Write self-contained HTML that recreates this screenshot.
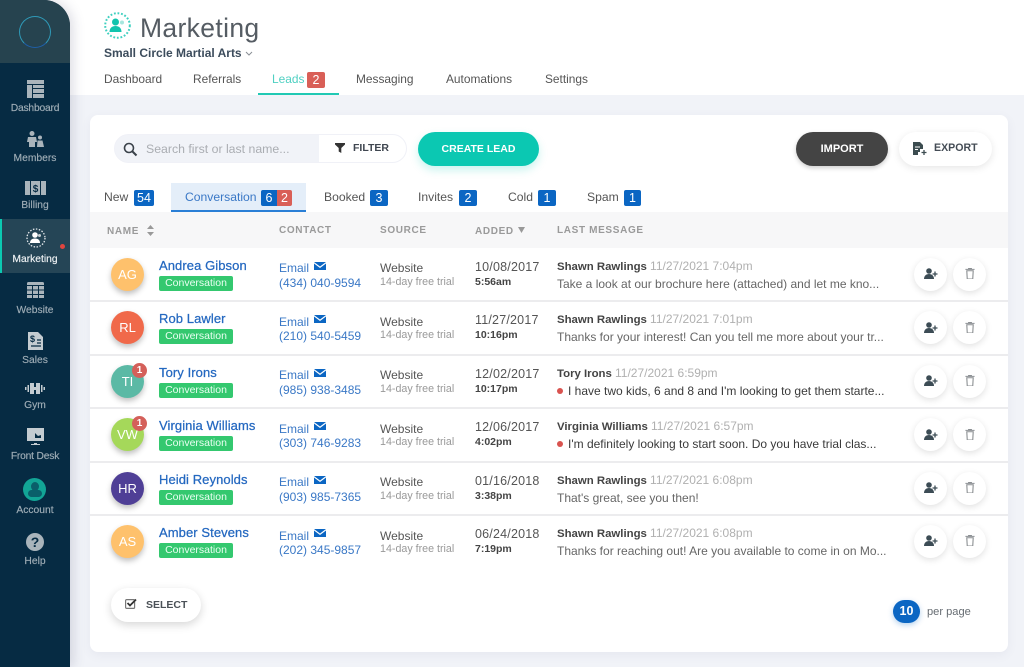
<!DOCTYPE html>
<html><head><meta charset="utf-8"><style>
*{box-sizing:border-box}
html,body{margin:0;padding:0;width:1024px;height:667px;overflow:hidden;background:#f1f3f8;font-family:"Liberation Sans",sans-serif}
.t{position:absolute;white-space:nowrap;line-height:1}
.a{position:absolute}
.nav{color:#9fadb6;font-size:10.3px;width:70px;text-align:center;left:0;margin-top:1px;-webkit-text-stroke:.15px #9fadb6}
.ti{color:#555;font-size:12.15px}
.n{color:#555;font-size:11.9px;margin-top:1px}
.h{color:#9a9a9a;font-size:10px;font-weight:bold;letter-spacing:.65px;margin-top:1px}
.b{position:absolute;height:16px;border-radius:2px;background:#0b66c3;color:#fff;font-size:12.5px;line-height:16px;text-align:center}
.nm{color:#2468c0;font-size:13px;letter-spacing:.08px;-webkit-text-stroke:.25px #2468c0}
.tag{position:absolute;left:159px;width:74px;height:15px;border-radius:2px;background:#34c86f;color:#eafff2;font-size:10.5px;line-height:15px;text-align:center}
.bl{color:#3a78c6;font-size:12px;margin-top:1px}
.d{color:#555;font-size:12px}
.dt{color:#555;font-size:12.5px;letter-spacing:.2px}
.s{color:#999;font-size:10.7px}
.tm{color:#444;font-size:10.5px;font-weight:bold}
.who{color:#444;font-size:11.4px;font-weight:bold}
.wh{color:#b0b0b0;font-size:12px;font-weight:normal}
.m{color:#666;font-size:12px}
.m2{color:#3a3a3a;font-size:12px}
.av{position:absolute;left:111px;width:33px;height:33px;border-radius:50%;color:#fff;font-size:13px;line-height:33px;text-align:center;box-shadow:0 3px 6px rgba(0,0,0,.25)}
.rb{position:absolute;width:33px;height:33px;border-radius:50%;background:#fff;box-shadow:0 2px 7px rgba(0,0,0,.12)}
.sep{position:absolute;left:90px;width:918px;height:1.5px;background:#ececee}
.dot{position:absolute;width:15px;height:15px;border-radius:50%;background:#d4605a;color:#fff;font-size:10px;font-weight:bold;line-height:15px;text-align:center;left:132px}
.rd{position:absolute;left:557px;width:6px;height:6px;border-radius:50%;background:#d9534f}
svg{position:absolute;display:block}
</style></head><body>
<!-- header -->
<div class="a" style="left:0;top:0;width:1024px;height:95px;background:#fff"></div>
<!-- sidebar -->
<div class="a" style="left:0;top:0;width:70px;height:667px;background:#062b43;border-top-right-radius:26px;box-shadow:3px 0 12px rgba(60,60,100,.18);overflow:hidden">
 <div class="a" style="left:0;top:0;width:70px;height:63px;background:#26434f"></div>
 <div class="a" style="left:0;top:219px;width:70px;height:54px;background:#254556"></div>
 <div class="a" style="left:0;top:219px;width:2px;height:54px;background:#0bc9b2"></div>
</div>
<div class="a" style="left:19px;top:16px;width:32px;height:32px;border-radius:50%;border:1.3px solid #2f9ab8;border-bottom-color:#1f5fa8"></div>
<!-- sidebar icons -->
<svg style="left:27px;top:80px" width="17" height="18" viewBox="0 0 17 18" fill="#a9b4bb"><path d="M0 0h17v4H0zM0 5h5v13H0zM6 5h11v3H6zM6 9h11v4H6zM6 14h11v4H6z"/></svg>
<svg style="left:27px;top:131px" width="17" height="16" viewBox="0 0 17 16" fill="#a9b4bb"><circle cx="5" cy="2.500" r="2.500"/><path d="M1 6h8l1 5H8v5H2v-5H0z"/><circle cx="13" cy="6.500" r="2"/><path d="M10.500 9.500h5l1.500 6.500h-7z"/></svg>
<svg style="left:25px;top:181px" width="21" height="14" viewBox="0 0 21 14" fill="#a9b4bb"><path d="M0 0h5v14H0zM16 0h5v14h-5zM6 0h9v14H6z"/><text x="10.500" y="11" font-size="10" font-weight="bold" text-anchor="middle" fill="#062b43" font-family="Liberation Sans">$</text></svg>
<svg style="left:26px;top:228px" width="20" height="20" viewBox="0 0 20 20"><circle cx="10" cy="10" r="9" fill="none" stroke="#e5e9ec" stroke-width="1.300" stroke-dasharray="1.500 1.500"/><circle cx="9" cy="7" r="2.800" fill="#fff"/><path d="M4 15c0-3 2-4.500 5-4.500s5 1.500 5 4.500z" fill="#fff"/><circle cx="13.500" cy="7.500" r="1.500" fill="#c9d0d5"/></svg>
<div class="a" style="left:60px;top:244px;width:5px;height:5px;border-radius:50%;background:#e0453f"></div>
<svg style="left:27px;top:282px" width="17" height="16" viewBox="0 0 17 16" fill="#a9b4bb"><path d="M0 1.500Q0 0 1.500 0h14Q17 0 17 1.500V3H0zM0 4h5v3.500H0zM6 4h5v3.500H6zM12 4h5v3.500h-5zM0 8.500h5V12H0zM6 8.500h5V12H6zM12 8.500h5V12h-5zM0 13h5v3H0zM6 13h5v3H6zM12 13h5v3h-5z"/></svg>
<svg style="left:28px;top:332px" width="15" height="18" viewBox="0 0 15 18"><path d="M0 0h10l5 5v13H0z" fill="#c4ccd1"/><text x="4.500" y="10" font-size="9" font-weight="bold" text-anchor="middle" fill="#062b43" font-family="Liberation Sans">$</text><path d="M9 8h4M9 11h4M3 14h10" stroke="#062b43" stroke-width="1.200"/></svg>
<svg style="left:25px;top:383px" width="20" height="11" viewBox="0 0 20 11" fill="#c4ccd1"><path d="M0 4h1.500v3H0zM2.500 2H4v7H2.500zM5 0h4v11H5zM9 4h2v3H9zM11 0h4v11h-4zM16 2h1.500v7H16zM18.500 4H20v3h-1.500z"/></svg>
<svg style="left:27px;top:428px" width="17" height="18" viewBox="0 0 17 18"><path d="M0 0h17v13H0z" fill="#c4ccd1"/><path d="M7 15h3v1h3v1H4v-1h3z" fill="#c4ccd1"/><path d="M8 5l3 3 3-1v3H8z" fill="#062b43"/></svg>
<div class="a" style="left:23px;top:478px;width:23px;height:23px;border-radius:50%;background:#12a596;overflow:hidden"><div class="a" style="left:7.500px;top:4px;width:8px;height:9px;border-radius:50%;background:#0a5f6a"></div><div class="a" style="left:4.500px;top:12px;width:14px;height:7px;border-radius:4px;background:#0a5f6a"></div></div>
<div class="a" style="left:26px;top:533px;width:18px;height:18px;border-radius:50%;background:#a9b4bb;color:#062b43;font-size:14px;font-weight:bold;line-height:18px;text-align:center">?</div>
<div class="t nav" style="top:103px;letter-spacing:-.2px">Dashboard</div>
<div class="t nav" style="top:153px">Members</div>
<div class="t nav" style="top:200px">Billing</div>
<div class="t nav" style="top:254px;color:#f0f3f5;-webkit-text-stroke:.15px #f0f3f5">Marketing</div>
<div class="t nav" style="top:305px">Website</div>
<div class="t nav" style="top:355px">Sales</div>
<div class="t nav" style="top:400px">Gym</div>
<div class="t nav" style="top:451px;letter-spacing:-.2px">Front Desk</div>
<div class="t nav" style="top:505px">Account</div>
<div class="t nav" style="top:556px">Help</div>
<!-- title -->
<svg style="left:104px;top:12px" width="27" height="27" viewBox="0 0 27 27"><circle cx="13.500" cy="13.500" r="12.300" fill="none" stroke="#3fd0c0" stroke-width="2" stroke-dasharray="1.800 1.800"/><circle cx="11.500" cy="10" r="3.500" fill="#12c4ae"/><path d="M5.500 20c0-4 2.500-6 6-6s6 2 6 6z" fill="#12c4ae"/><circle cx="18" cy="10.500" r="2" fill="#a6e6de"/></svg>
<div class="t" style="left:140px;top:15px;font-size:26.500px;color:#555c63;letter-spacing:.35px">Marketing</div>
<div class="t" style="left:104px;top:47px;font-size:12px;color:#3c4c5c;font-weight:bold">Small Circle Martial Arts</div>
<svg style="left:245px;top:51px" width="8" height="6" viewBox="0 0 8 6"><path d="M1 1l3 3 3-3" fill="none" stroke="#8a8f95" stroke-width="1"/></svg>
<div class="t n" style="left:104px;top:73px">Dashboard</div>
<div class="t n" style="left:193px;top:73px">Referrals</div>
<div class="t n" style="left:272px;top:73px;color:#4fd0c2">Leads</div>
<div class="b" style="left:307px;top:72px;width:18px;height:16px;background:#d95f57;font-size:12.500px">2</div>
<div class="a" style="left:258px;top:93px;width:81px;height:2px;background:#21c9b4"></div>
<div class="t n" style="left:356px;top:73px">Messaging</div>
<div class="t n" style="left:446px;top:73px">Automations</div>
<div class="t n" style="left:545px;top:73px">Settings</div>
<!-- card -->
<div class="a" style="left:90px;top:115px;width:918px;height:537px;background:#fff;border-radius:8px;box-shadow:0 3px 10px rgba(90,90,130,.07)"></div>
<!-- search -->
<div class="a" style="left:114px;top:134px;width:293px;height:29px;border-radius:15px;background:#f1f3f8;border:1px solid #f0f1f7"></div>
<div class="a" style="left:319px;top:135px;width:87px;height:27px;border-radius:0 14px 14px 0;background:#fff"></div>
<svg style="left:123px;top:142px" width="15" height="15" viewBox="0 0 15 15"><circle cx="6" cy="6" r="4.500" fill="none" stroke="#3b424a" stroke-width="1.600"/><path d="M9.500 9.500l4 4" stroke="#3b424a" stroke-width="2"/></svg>
<div class="t" style="left:146px;top:143px;font-size:12.300px;color:#aaadb2">Search first or last name...</div>
<svg style="left:335px;top:143px" width="10" height="10" viewBox="0 0 10 10"><path d="M0 0h10v1.500L6.300 5v5L3.700 8.500V5L0 1.500z" fill="#333"/></svg>
<div class="t" style="left:353px;top:143px;font-size:10.500px;font-weight:bold;color:#3f4650">FILTER</div>
<!-- buttons -->
<div class="a" style="left:418px;top:132px;width:121px;height:34px;border-radius:17px;background:#0bc8b2;box-shadow:0 4px 9px rgba(11,200,178,.22);color:#fff;font-size:10.500px;font-weight:bold;line-height:32px;text-align:center"><span style="position:relative;top:.5px">CREATE LEAD</span></div>
<div class="a" style="left:796px;top:132px;width:92px;height:34px;border-radius:17px;background:#444;box-shadow:0 2px 5px rgba(0,0,0,.2);color:#fff;font-size:11px;font-weight:bold;line-height:32px;text-align:center"><span style="position:relative;top:.5px">IMPORT</span></div>
<div class="a" style="left:899px;top:132px;width:93px;height:34px;border-radius:17px;background:#fff;box-shadow:0 2px 8px rgba(0,0,0,.1)"></div>
<svg style="left:913px;top:142px" width="14" height="14" viewBox="0 0 14 14"><path d="M0 0h7l3 3v4H7v3H5v3H0z" fill="#3c4c50"/><path d="M2 5h5M2 7.500h3" stroke="#fff"/><path d="M11 8v5M8.500 10.500h5" stroke="#3c4c50" stroke-width="1.300"/></svg>
<div class="t" style="left:934px;top:143px;font-size:10.600px;font-weight:bold;color:#444c55">EXPORT</div>
<!-- tabs -->
<div class="a" style="left:171px;top:183px;width:135px;height:29px;background:#e4eef9;border-bottom:2px solid #2a7fd6"></div>
<div class="t ti" style="left:104px;top:191px">New</div>
<div class="b" style="left:134px;top:190px;width:20px">54</div>
<div class="t ti" style="left:185px;top:191px;color:#3a78c6">Conversation</div>
<div class="b" style="left:261px;top:190px;width:16px;border-radius:2px 0 0 2px">6</div>
<div class="b" style="left:277px;top:190px;width:15px;border-radius:0 2px 2px 0;background:#d95f57">2</div>
<div class="t ti" style="left:324px;top:191px">Booked</div>
<div class="b" style="left:370px;top:190px;width:18px">3</div>
<div class="t ti" style="left:418px;top:191px">Invites</div>
<div class="b" style="left:459px;top:190px;width:18px">2</div>
<div class="t ti" style="left:508px;top:191px">Cold</div>
<div class="b" style="left:538px;top:190px;width:18px">1</div>
<div class="t ti" style="left:587px;top:191px">Spam</div>
<div class="b" style="left:624px;top:190px;width:17px">1</div>
<!-- table head -->
<div class="a" style="left:90px;top:212px;width:918px;height:36px;background:#f7f7f8"></div>
<div class="t h" style="left:107px;top:226px">NAME</div>
<svg style="left:147px;top:225px" width="7" height="11" viewBox="0 0 7 11" fill="#999"><path d="M3.500 0L7 4H0zM3.500 11L0 7h7z"/></svg>
<div class="t h" style="left:279px;top:225px">CONTACT</div>
<div class="t h" style="left:380px;top:225px">SOURCE</div>
<div class="t h" style="left:475px;top:226px">ADDED</div>
<svg style="left:518px;top:227px" width="7" height="6" viewBox="0 0 7 6" fill="#999"><path d="M0 0h7L3.500 6z"/></svg>
<div class="t h" style="left:557px;top:225px">LAST MESSAGE</div>
<div class="sep" style="top:300px"></div><div class="sep" style="top:354px"></div><div class="sep" style="top:407px"></div><div class="sep" style="top:461px"></div><div class="sep" style="top:514px"></div>

<!-- row 1 -->
<div class="av" style="top:258px;background:#fec16c">AG</div>
<div class="t nm" style="left:159px;top:259px">Andrea Gibson</div><div class="tag" style="top:276px">Conversation</div>
<div class="t bl" style="left:279px;top:261px">Email</div><svg style="left:314px;top:262px" width="12" height="8" viewBox="0 0 12 8"><path d="M0 0h12L6 4.500zM0 1.500l6 4.500 6-4.500V8H0z" fill="#0b66c3"/></svg>
<div class="t bl" style="left:279px;top:276px">(434) 040-9594</div>
<div class="t d" style="left:380px;top:262px">Website</div><div class="t s" style="left:380px;top:277px">14-day free trial</div>
<div class="t dt" style="left:475px;top:261px">10/08/2017</div><div class="t tm" style="left:475px;top:277px">5:56am</div>
<div class="t who" style="left:557px;top:260px">Shawn Rawlings <span class="wh">11/27/2021 7:04pm</span></div>
<div class="t m" style="left:557px;top:278px">Take a look at our brochure here (attached) and let me kno...</div>
<div class="rb" style="left:914px;top:258px"></div><div class="rb" style="left:953px;top:258px"></div>
<svg style="left:924px;top:268px" width="14" height="11" viewBox="0 0 14 11"><circle cx="5" cy="3" r="2.800" fill="#3c4c55"/><path d="M0 11c0-3 2-5 5-5s5 2 5 5z" fill="#3c4c55"/><path d="M11 3.500v5M8.500 6h5" stroke="#3c4c55" stroke-width="1.300"/></svg>
<svg style="left:965px;top:268px" width="10" height="11" viewBox="0 0 10 12"><path d="M1.500 3h7l-.5 9H2zM0 1.500h10M3.500 1.500V.5h3v1" fill="none" stroke="#8b8f92" stroke-width="1.200"/></svg>
<!-- row 2 -->
<div class="av" style="top:311px;background:#f0694a">RL</div>
<div class="t nm" style="left:159px;top:312px">Rob Lawler</div><div class="tag" style="top:329px">Conversation</div>
<div class="t bl" style="left:279px;top:315px">Email</div><svg style="left:314px;top:315px" width="12" height="8" viewBox="0 0 12 8"><path d="M0 0h12L6 4.500zM0 1.500l6 4.500 6-4.500V8H0z" fill="#0b66c3"/></svg>
<div class="t bl" style="left:279px;top:329px">(210) 540-5459</div>
<div class="t d" style="left:380px;top:316px">Website</div><div class="t s" style="left:380px;top:330px">14-day free trial</div>
<div class="t dt" style="left:475px;top:314px">11/27/2017</div><div class="t tm" style="left:475px;top:330px">10:16pm</div>
<div class="t who" style="left:557px;top:313px">Shawn Rawlings <span class="wh">11/27/2021 7:01pm</span></div>
<div class="t m" style="left:557px;top:331px">Thanks for your interest! Can you tell me more about your tr...</div>
<div class="rb" style="left:914px;top:311px"></div><div class="rb" style="left:953px;top:311px"></div>
<svg style="left:924px;top:322px" width="14" height="11" viewBox="0 0 14 11"><circle cx="5" cy="3" r="2.800" fill="#3c4c55"/><path d="M0 11c0-3 2-5 5-5s5 2 5 5z" fill="#3c4c55"/><path d="M11 3.500v5M8.500 6h5" stroke="#3c4c55" stroke-width="1.300"/></svg>
<svg style="left:965px;top:322px" width="10" height="11" viewBox="0 0 10 12"><path d="M1.500 3h7l-.5 9H2zM0 1.500h10M3.500 1.500V.5h3v1" fill="none" stroke="#8b8f92" stroke-width="1.200"/></svg>
<!-- row 3 -->
<div class="av" style="top:365px;background:#5bb9a5">TI</div><div class="dot" style="top:363px">1</div>
<div class="t nm" style="left:159px;top:366px">Tory Irons</div><div class="tag" style="top:383px">Conversation</div>
<div class="t bl" style="left:279px;top:368px">Email</div><svg style="left:314px;top:369px" width="12" height="8" viewBox="0 0 12 8"><path d="M0 0h12L6 4.500zM0 1.500l6 4.500 6-4.500V8H0z" fill="#0b66c3"/></svg>
<div class="t bl" style="left:279px;top:383px">(985) 938-3485</div>
<div class="t d" style="left:380px;top:369px">Website</div><div class="t s" style="left:380px;top:384px">14-day free trial</div>
<div class="t dt" style="left:475px;top:368px">12/02/2017</div><div class="t tm" style="left:475px;top:384px">10:17pm</div>
<div class="t who" style="left:557px;top:367px">Tory Irons <span class="wh">11/27/2021 6:59pm</span></div>
<div class="rd" style="top:388px"></div><div class="t m2" style="left:568px;top:385px">I have two kids, 6 and 8 and I'm looking to get them starte...</div>
<div class="rb" style="left:914px;top:365px"></div><div class="rb" style="left:953px;top:365px"></div>
<svg style="left:924px;top:375px" width="14" height="11" viewBox="0 0 14 11"><circle cx="5" cy="3" r="2.800" fill="#3c4c55"/><path d="M0 11c0-3 2-5 5-5s5 2 5 5z" fill="#3c4c55"/><path d="M11 3.500v5M8.500 6h5" stroke="#3c4c55" stroke-width="1.300"/></svg>
<svg style="left:965px;top:375px" width="10" height="11" viewBox="0 0 10 12"><path d="M1.500 3h7l-.5 9H2zM0 1.500h10M3.500 1.500V.5h3v1" fill="none" stroke="#8b8f92" stroke-width="1.200"/></svg>
<!-- row 4 -->
<div class="av" style="top:418px;background:#a5d85a">VW</div><div class="dot" style="top:416px">1</div>
<div class="t nm" style="left:159px;top:419px">Virginia Williams</div><div class="tag" style="top:436px">Conversation</div>
<div class="t bl" style="left:279px;top:422px">Email</div><svg style="left:314px;top:422px" width="12" height="8" viewBox="0 0 12 8"><path d="M0 0h12L6 4.500zM0 1.500l6 4.500 6-4.500V8H0z" fill="#0b66c3"/></svg>
<div class="t bl" style="left:279px;top:436px">(303) 746-9283</div>
<div class="t d" style="left:380px;top:423px">Website</div><div class="t s" style="left:380px;top:437px">14-day free trial</div>
<div class="t dt" style="left:475px;top:421px">12/06/2017</div><div class="t tm" style="left:475px;top:437px">4:02pm</div>
<div class="t who" style="left:557px;top:420px">Virginia Williams <span class="wh">11/27/2021 6:57pm</span></div>
<div class="rd" style="top:441px"></div><div class="t m2" style="left:568px;top:438px">I'm definitely looking to start soon. Do you have trial clas...</div>
<div class="rb" style="left:914px;top:418px"></div><div class="rb" style="left:953px;top:418px"></div>
<svg style="left:924px;top:429px" width="14" height="11" viewBox="0 0 14 11"><circle cx="5" cy="3" r="2.800" fill="#3c4c55"/><path d="M0 11c0-3 2-5 5-5s5 2 5 5z" fill="#3c4c55"/><path d="M11 3.500v5M8.500 6h5" stroke="#3c4c55" stroke-width="1.300"/></svg>
<svg style="left:965px;top:429px" width="10" height="11" viewBox="0 0 10 12"><path d="M1.500 3h7l-.5 9H2zM0 1.500h10M3.500 1.500V.5h3v1" fill="none" stroke="#8b8f92" stroke-width="1.200"/></svg>
<!-- row 5 -->
<div class="av" style="top:472px;background:#4f3f96">HR</div>
<div class="t nm" style="left:159px;top:473px">Heidi Reynolds</div><div class="tag" style="top:490px">Conversation</div>
<div class="t bl" style="left:279px;top:475px">Email</div><svg style="left:314px;top:476px" width="12" height="8" viewBox="0 0 12 8"><path d="M0 0h12L6 4.500zM0 1.500l6 4.500 6-4.500V8H0z" fill="#0b66c3"/></svg>
<div class="t bl" style="left:279px;top:490px">(903) 985-7365</div>
<div class="t d" style="left:380px;top:476px">Website</div><div class="t s" style="left:380px;top:491px">14-day free trial</div>
<div class="t dt" style="left:475px;top:475px">01/16/2018</div><div class="t tm" style="left:475px;top:491px">3:38pm</div>
<div class="t who" style="left:557px;top:474px">Shawn Rawlings <span class="wh">11/27/2021 6:08pm</span></div>
<div class="t m" style="left:557px;top:492px">That's great, see you then!</div>
<div class="rb" style="left:914px;top:472px"></div><div class="rb" style="left:953px;top:472px"></div>
<svg style="left:924px;top:482px" width="14" height="11" viewBox="0 0 14 11"><circle cx="5" cy="3" r="2.800" fill="#3c4c55"/><path d="M0 11c0-3 2-5 5-5s5 2 5 5z" fill="#3c4c55"/><path d="M11 3.500v5M8.500 6h5" stroke="#3c4c55" stroke-width="1.300"/></svg>
<svg style="left:965px;top:482px" width="10" height="11" viewBox="0 0 10 12"><path d="M1.500 3h7l-.5 9H2zM0 1.500h10M3.500 1.500V.5h3v1" fill="none" stroke="#8b8f92" stroke-width="1.200"/></svg>
<!-- row 6 -->
<div class="av" style="top:525px;background:#fec16c">AS</div>
<div class="t nm" style="left:159px;top:526px">Amber Stevens</div><div class="tag" style="top:543px">Conversation</div>
<div class="t bl" style="left:279px;top:529px">Email</div><svg style="left:314px;top:529px" width="12" height="8" viewBox="0 0 12 8"><path d="M0 0h12L6 4.500zM0 1.500l6 4.500 6-4.500V8H0z" fill="#0b66c3"/></svg>
<div class="t bl" style="left:279px;top:543px">(202) 345-9857</div>
<div class="t d" style="left:380px;top:530px">Website</div><div class="t s" style="left:380px;top:544px">14-day free trial</div>
<div class="t dt" style="left:475px;top:528px">06/24/2018</div><div class="t tm" style="left:475px;top:544px">7:19pm</div>
<div class="t who" style="left:557px;top:527px">Shawn Rawlings <span class="wh">11/27/2021 6:08pm</span></div>
<div class="t m" style="left:557px;top:545px">Thanks for reaching out! Are you available to come in on Mo...</div>
<div class="rb" style="left:914px;top:525px"></div><div class="rb" style="left:953px;top:525px"></div>
<svg style="left:924px;top:535px" width="14" height="11" viewBox="0 0 14 11"><circle cx="5" cy="3" r="2.800" fill="#3c4c55"/><path d="M0 11c0-3 2-5 5-5s5 2 5 5z" fill="#3c4c55"/><path d="M11 3.500v5M8.500 6h5" stroke="#3c4c55" stroke-width="1.300"/></svg>
<svg style="left:965px;top:535px" width="10" height="11" viewBox="0 0 10 12"><path d="M1.500 3h7l-.5 9H2zM0 1.500h10M3.500 1.500V.5h3v1" fill="none" stroke="#8b8f92" stroke-width="1.200"/></svg>
<!-- footer -->
<div class="a" style="left:111px;top:588px;width:90px;height:34px;border-radius:17px;background:#fff;box-shadow:0 3px 9px rgba(0,0,0,.16)"></div>
<svg style="left:125px;top:598px" width="12" height="11" viewBox="0 0 12 11"><rect x=".6" y="1.600" width="9" height="8.800" rx="1" fill="none" stroke="#777" stroke-width="1.200"/><path d="M2.500 5l2.500 2.500L11 1.500" fill="none" stroke="#333" stroke-width="1.800"/></svg>
<div class="t" style="left:146px;top:600px;font-size:10.500px;font-weight:bold;color:#4b5157">SELECT</div>
<div class="a" style="left:893px;top:600px;width:27px;height:23px;border-radius:12px;background:#0b66c3;box-shadow:0 2px 6px rgba(11,102,195,.3);color:#fff;font-size:12.500px;font-weight:bold;line-height:23px;text-align:center">10</div>
<div class="t" style="left:927px;top:607px;font-size:11.100px;color:#666c72">per page</div>
</body></html>
